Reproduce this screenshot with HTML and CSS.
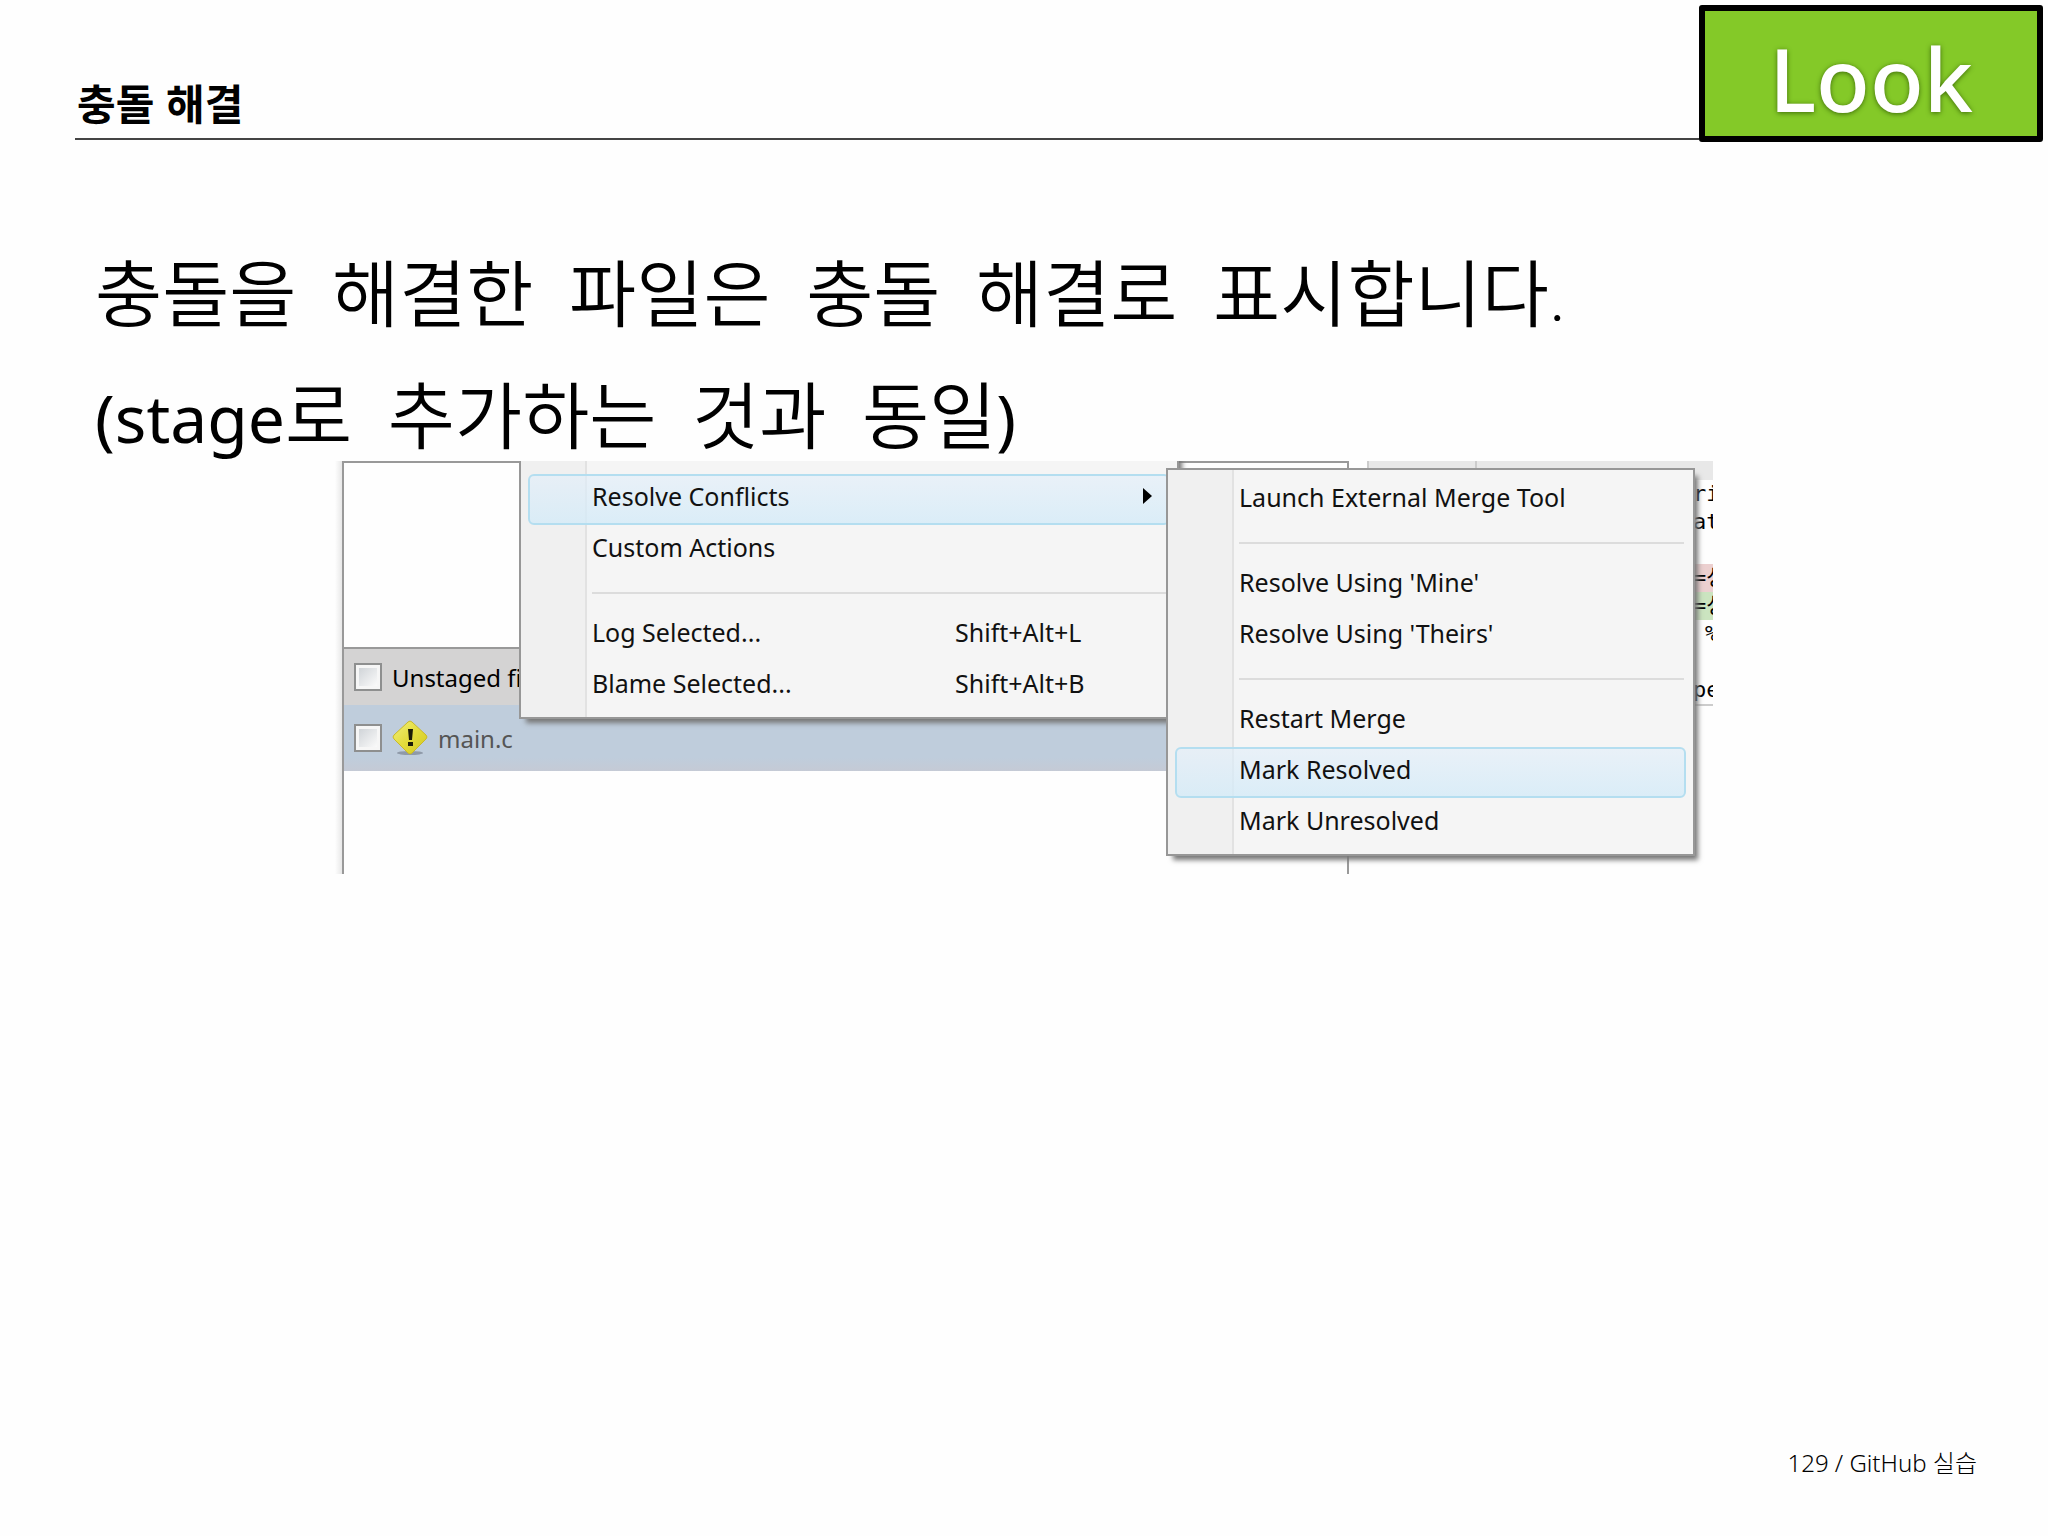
FILE: index.html
```
<!DOCTYPE html>
<html lang="ko">
<head>
  <meta charset="utf-8">
  <title>충돌 해결</title>
  <link rel="stylesheet" href="styles.css">
</head>
<body>
  <header class="slide-header">
    <h1 class="slide-title">충돌 해결</h1>
    <div class="badge">Look</div>
  </header>
  <main>
    <div class="description">
      <p>충돌을  해결한  파일은  충돌  해결로  표시합니다.</p>
      <p><span class="latin">(stage</span>로  추가하는  것과  동일<span class="latin">)</span></p>
    </div>
    <div class="window">
      <div class="files">
        <div class="staged"></div>
        <div class="files-header">
          <input type="checkbox" class="check" id="all-files">
          <label for="all-files">Unstaged files</label>
        </div>
        <div class="file-row">
          <input type="checkbox" class="check" id="file-main">
          <svg class="warning" viewBox="0 0 36 36" aria-hidden="true">
            <defs>
              <linearGradient id="warn" x1="0" y1="0" x2="1" y2="1">
                <stop offset="0" stop-color="#f2ef7a"/>
                <stop offset="0.5" stop-color="#e3dc3c"/>
                <stop offset="1" stop-color="#d2c81e"/>
              </linearGradient>
            </defs>
            <ellipse cx="18" cy="33" rx="13" ry="2" fill="#8f9aa8"/>
            <path d="M16 2Q18 0 20 2L34 15Q36 17 34 19L20 33Q18 35 16 33L2 19Q0 17 2 15Z" fill="url(#warn)" stroke="#c9b92a"/>
            <path d="M16 9h5l-1 11h-3zM16 22h5v4h-5z" fill="#1c1c08"/>
          </svg>
          <label for="file-main">main.c</label>
        </div>
      </div>
      <div class="diff">
        <div class="diff-header"><span></span><span></span></div>
        <div class="code">
          <div>ri</div>
          <div>at</div>
          <div></div>
          <div class="removed">=성</div>
          <div class="added">=성</div>
          <div class="indent">%</div>
          <div></div>
          <div>pe</div>
        </div>
      </div>
      <div class="menu menu-main">
        <button type="button" class="item active">Resolve Conflicts
          <svg class="arrow" viewBox="0 0 9 16" aria-hidden="true"><path d="M0 0l9 8-9 8z"/></svg>
        </button>
        <button type="button" class="item">Custom Actions</button>
        <hr>
        <button type="button" class="item">Log Selected...<span class="key">Shift+Alt+L</span></button>
        <button type="button" class="item">Blame Selected...<span class="key">Shift+Alt+B</span></button>
      </div>
      <div class="menu menu-sub">
        <button type="button" class="item">Launch External Merge Tool</button>
        <hr>
        <button type="button" class="item">Resolve Using 'Mine'</button>
        <button type="button" class="item">Resolve Using 'Theirs'</button>
        <hr>
        <button type="button" class="item">Restart Merge</button>
        <button type="button" class="item active">Mark Resolved</button>
        <button type="button" class="item">Mark Unresolved</button>
      </div>
    </div>
  </main>
  <footer>129 / GitHub 실습</footer>
</body>
</html>
```
FILE: styles.css
```
* {
  box-sizing: border-box;
}
body {
  margin: 0;
  min-height: 100vh;
  display: flex;
  flex-direction: column;
  background: #fefefe;
  color: #000;
  font-family: "Noto Sans", "Noto Sans CJK KR", sans-serif;
}
.slide-header {
  display: flex;
  align-items: flex-end;
  padding: 5px 5px 0 75px;
}
.slide-title {
  flex: 1;
  margin: 0 0 2px;
  padding: 0 2px 6px;
  border-bottom: 2px solid #444;
  font: bold 42px/60px "Noto Sans CJK KR", sans-serif;
}
.badge {
  width: 344px;
  height: 137px;
  border: 6px solid #000;
  border-radius: 3px;
  background: #84c928;
  color: #fff;
  font-size: 88px;
  font-weight: 500;
  line-height: 134px;
  text-align: center;
  text-shadow: 0 1px 5px #3c6a08;
}
.description {
  padding: 93px 95px 0;
  font: 350 73px/122px Roboto, "Noto Sans CJK KR", sans-serif;
}
.description p {
  margin: 0;
  white-space: pre-wrap;
}
.latin {
  font-family: "Noto Sans", sans-serif;
  font-size: 66px;
  font-weight: 400;
  line-height: 1;
}

/* client window */
.window {
  position: relative;
  display: flex;
  gap: 18px;
  max-width: 1378px;
  height: 413px;
  margin: -18px auto 0;
  padding-left: 7px;
  overflow: hidden;
  background: linear-gradient(to right, #fefefe, #e8e8e8 7px, #fefefe 7px);
  font-size: 24px;
}
.files {
  flex: 1;
  border: solid #999;
  border-width: 2px 2px 0;
}
.staged {
  height: 184px;
}
.files-header, .file-row {
  display: flex;
  align-items: center;
  gap: 10px;
  padding-left: 10px;
}
.files-header {
  height: 58px;
  border-top: 2px solid #999;
  background: #d4d3d3;
}
.file-row {
  height: 66px;
  background: linear-gradient(#bfcddc 80%, #c5cad5);
  color: #555;
}
.check {
  appearance: none;
  width: 28px;
  height: 28px;
  margin: 0;
  border: 2px solid #8e8f8f;
  background: linear-gradient(135deg, #d0d4d8, #fafafa) content-box, #f6f6f6;
  padding: 3px;
}
.warning {
  width: 36px;
  height: 36px;
}
.diff {
  width: 346px;
}
.diff-header {
  display: flex;
  height: 19px;
  background: #e8e8e8;
}
.diff-header span {
  width: 108px;
  border-left: 2px solid #ccc;
}
.code {
  border-bottom: 2px solid #ccc;
  font: 22px/28px "DejaVu Sans Mono", "Noto Sans CJK KR", monospace;
}
.code div {
  height: 28px;
  padding-left: 326px;
  overflow: hidden;
  white-space: nowrap;
}
.code .indent {
  padding-left: 338px;
}
.removed {
  background: #ecd0d0;
}
.added {
  background: #cbe4c0;
}

/* popup menus */
.menu {
  position: absolute;
  padding: 5px 7px;
  border: 2px solid #979797;
  background: linear-gradient(to right, #f0f0f0 64px, #e2e2e2 64px, #e2e2e2 66px, #f5f5f5 66px);
  box-shadow: 5px 6px 5px -2px #777;
}
.menu-main {
  top: -60px;
  left: 184px;
  width: 660px;
  height: 318px;
  padding-top: 71px;
}
.menu-sub {
  top: 7px;
  left: 831px;
  width: 529px;
}
.item {
  display: flex;
  align-items: center;
  width: 100%;
  height: 51px;
  padding: 0 16px 8px 62px;
  border: 2px solid transparent;
  border-radius: 6px;
  background: none;
  color: #111;
  font: 25px "Noto Sans", sans-serif;
  text-align: left;
}
.active {
  border-color: #b4def0;
  background: linear-gradient(rgba(225, 238, 250, 0.6), rgba(212, 235, 248, 0.8));
}
.arrow {
  width: 9px;
  height: 16px;
  margin-left: auto;
}
.key {
  width: 197px;
  margin-left: auto;
}
.menu hr {
  height: 34px;
  margin: 0 2px 0 64px;
  border: 0;
  background: linear-gradient(#dcdcdc, #dcdcdc) center / 100% 2px no-repeat;
}
footer {
  margin-top: auto;
  padding: 0 71px 55px;
  font-size: 24px;
  font-weight: 300;
  line-height: 36px;
  text-align: right;
}
```
